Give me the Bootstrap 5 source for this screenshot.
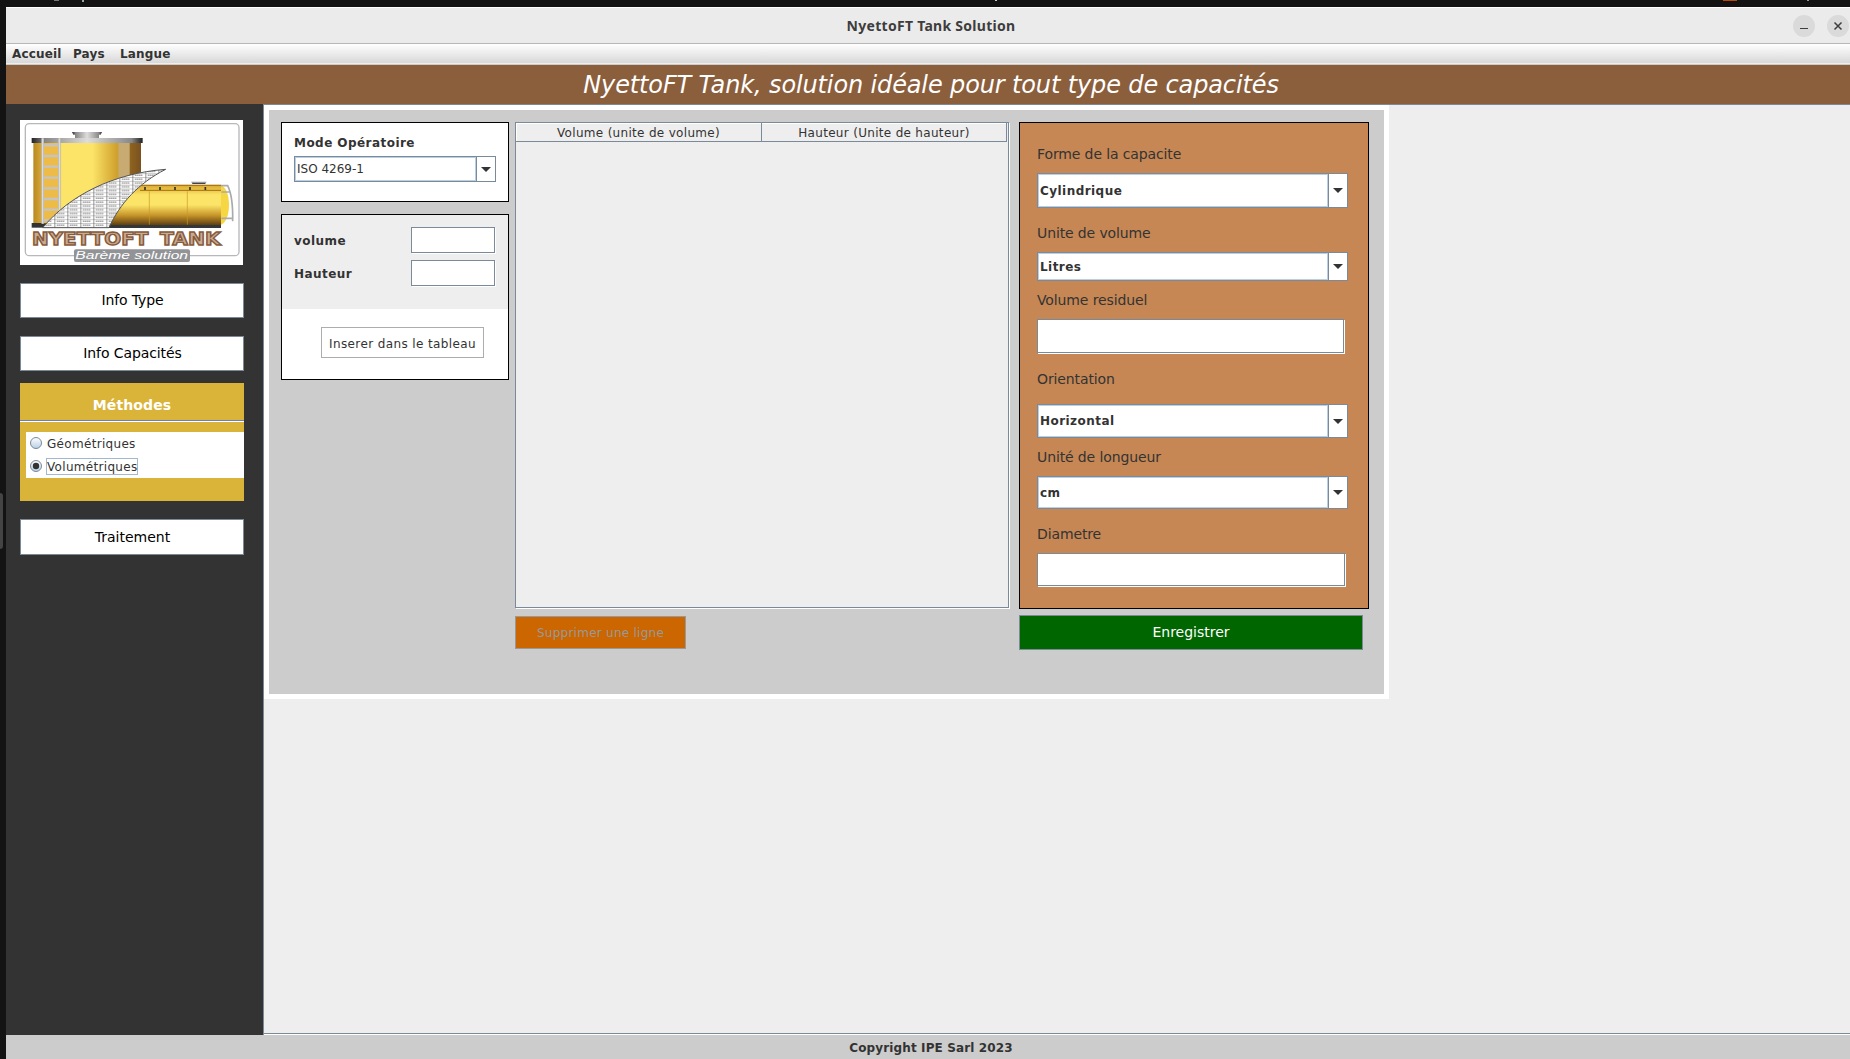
<!DOCTYPE html>
<html lang="fr">
<head>
<meta charset="utf-8">
<title>NyettoFT Tank Solution</title>
<link rel="stylesheet" href="https://cdn.jsdelivr.net/npm/bootstrap@5.3.0/dist/css/bootstrap.min.css">
<script src="https://cdn.jsdelivr.net/npm/bootstrap@5.3.0/dist/js/bootstrap.bundle.min.js"></script>
<style>
body{width:1850px;height:1059px;overflow:hidden;background:#131313;color:#333;font-family:"DejaVu Sans",sans-serif;font-size:12px;line-height:16px;letter-spacing:.31px}
.desk{height:1052px}
.desk-strip{height:7px;display:block}
.desk-edge{width:6px}
.edge-handle{width:3px;height:56px;margin-top:486px;background:#444;border-radius:0 3px 3px 0}
.titlebar{height:37px;background:#ebebeb;border-top:1px solid #fff;border-bottom:1px solid #b8b8b8}
.titlebar-lead{width:63px}
.titlebar-text{font-family:"Noto Sans","Open Sans",sans-serif;font-weight:700;font-size:14px;color:#3d3d3d;letter-spacing:.28px}
.menubar{height:21px;background:linear-gradient(#fff,#dadada 90%);border-bottom:1px solid #ccc;box-shadow:inset 0 -1px #eee;padding:0 0 1px 6px;font-weight:700;letter-spacing:.15px}
.menu-a{width:61px}.menu-b{width:47px}
.banner{height:39px;background:#8b5e3c;color:#fff;font-size:24px;font-style:italic;line-height:39px;padding:1px 0 0 6px;letter-spacing:-.13px}
.side{width:257px;background:#333;padding:16px 0 0 14px}
.side-btn{width:224px;height:35px;border:1px solid #7a8a99;border-radius:0;background:#fff;color:#000;font-size:14px;line-height:18px;padding:0 0 2px 1px;margin-top:18px;letter-spacing:-.1px}
.side-btn.tall{height:36px;padding-bottom:0;letter-spacing:0}
.logo{display:block;width:223px;height:145px}
.methods{width:224px;height:118px;background:#dab339;margin-top:12px}
.methods-title{height:37px;color:#fff;font-weight:700;font-size:14px;padding-top:7px;letter-spacing:.1px}
.methods-rule{height:2px;border-top:1px solid #6382bf;background:#fff}
.radio-box{margin:10px 0 0 6px;height:46px;background:#fff;padding:0 0 0 4px}
.radio-row{height:23px}
.radio-row svg{margin-top:-1px}
.radio-txt{border:1px solid transparent;height:17px;line-height:17px;padding:0}
.radio-txt.focused{border-color:#a3b8cc;width:92px}
.main-pane{border-left:1px solid #7a8a99;border-top:1px solid #7a8a99;background:#eee;box-shadow:inset 0 -1px #fff,inset 0 -2px #7a8a99}
.work{width:1125px;height:594px;border:5px solid #fff;background:#ccc;padding:12px 0 0 12px}
.left-col{width:234px;gap:12px}
.table-col{width:504px}
.black-box{border:1px solid #000}
.mode{width:228px;height:80px;background:#fff;padding:12px 12px 0}
.bold{font-weight:700;letter-spacing:.45px}
.combo{border:1px solid #7a8a99;background:#fff;color:#333}
.combo-val{border:1px solid #b8cfe5;padding-left:1px}
.combo-plain{letter-spacing:0}
.combo-btn{width:19px;border-left:1px solid #7a8a99}
.field{border:1px solid #7a8a99;border-radius:0;background:#fff;box-shadow:1px 1px #fff;padding:0;min-height:0;margin:0 1px 1px 0}
.field-sm{width:84px;height:26px}
.insert{width:228px;height:166px;background:#fff}
.insert-top{height:94px;background:#eee;padding:12px 12px 0}
.btn-insert{width:163px;height:31px;border:1px solid #adadad;border-radius:0;background:#fff;color:#333;font-size:12px;line-height:16px;padding:2px 0 0;margin:18px 0 0 39px;letter-spacing:.38px}
.tbl{width:494px;height:486px;border:1px solid #7a8a99;background:#eee;box-shadow:1px 1px #fff}
.tbl-head{height:19px;border-bottom:1px solid #7a8a99;box-shadow:inset 1px 1px #fff;margin-right:1px}
.tbl-cell{border-right:1px solid #7a8a99;padding-top:2px}
.tbl-first{width:246px}
.btn-del{width:171px;height:33px;background:#cc6600;border:1px solid #999;border-radius:0;color:#999;font-size:12px;line-height:16px;padding:0;margin-top:8px;letter-spacing:.26px}
.btn-del:hover{color:#999;background:#cc6600}
.params{width:350px;height:487px;background:#c68754;padding:22px 0 0 17px}
.lbl{font-size:14px;line-height:18px;letter-spacing:-.12px}
.btn-save{width:344px;height:35px;background:#006600;border:1px solid #7a8a99;border-radius:0;color:#fff;font-size:14px;line-height:18px;padding:0 0 2px;margin-top:6px;letter-spacing:0}
.foot{height:24px;background:#ccc;font-weight:700;padding:1px 0 0 6px;letter-spacing:.13px}
.w311{width:311px}
.h26{height:26px}.h29{height:29px}.h33{height:33px}.h34{height:34px}.h35{height:35px}
.g5{margin-top:5px}.g6{margin-top:6px}.g10{margin-top:10px}.g16{margin-top:16px}.g17{margin-top:17px}
.f307{width:307px}.f308{width:308px}
</style>
</head>
<body>
<svg class="desk-strip" width="1850" height="7"><path d="M54 0h5v1h-5z" fill="#777"/><path d="M82 0h1v2h-1z" fill="#5bd"/><path d="M83 0h1v2h-1z" fill="#d96"/><path d="M995 0h2v1h-2z" fill="#ccc"/><path d="M1723 0h14v1h-14z" fill="#b84a0a"/><path d="M1807 0h2v1h-2z" fill="#999"/></svg>
<div class="desk d-flex">
<div class="desk-edge"><div class="edge-handle"></div></div>
<div class="flex-grow-1 d-flex flex-column">
  <header class="titlebar d-flex align-items-center">
    <div class="titlebar-lead"></div>
    <div class="flex-grow-1 text-center titlebar-text">NyettoFT Tank Solution</div>
    <svg width="57" height="24" viewBox="0 0 57 24"><circle cx="11" cy="12" r="11" fill="#dadada"/><path d="M7 14.5h8" stroke="#3d3d3d"/><circle cx="45" cy="12" r="11" fill="#dadada"/><path d="M41.5 8.500l7 7M48.500 8.500l-7 7" stroke="#3d3d3d" stroke-width="1.500"/></svg>
  </header>
  <nav class="menubar d-flex align-items-center"><span class="menu-a">Accueil</span><span class="menu-b">Pays</span><span>Langue</span></nav>
  <div class="banner text-center">NyettoFT Tank, solution idéale pour tout type de capacités</div>
  <div class="d-flex flex-grow-1">
    <aside class="side">
      <svg class="logo" viewBox="60 360 669 435" preserveAspectRatio="none">
        <defs>
          <linearGradient id="body1"><stop offset="0" stop-color="#b88a20"/><stop offset=".1" stop-color="#e0b040"/><stop offset=".27" stop-color="#fbe468"/><stop offset=".55" stop-color="#fbe468"/><stop offset=".78" stop-color="#cf9f2c"/><stop offset=".8" stop-color="#c8ab72"/><stop offset=".89" stop-color="#c8ab72"/><stop offset=".9" stop-color="#8e6420"/><stop offset="1" stop-color="#7a5020"/></linearGradient>
          <linearGradient id="rim"><stop offset="0" stop-color="#222"/><stop offset=".12" stop-color="#888"/><stop offset=".5" stop-color="#ddd"/><stop offset=".9" stop-color="#888"/><stop offset="1" stop-color="#222"/></linearGradient>
          <linearGradient id="body2" x2="0" y2="1"><stop offset="0" stop-color="#d9a52c"/><stop offset=".25" stop-color="#fbe468"/><stop offset=".5" stop-color="#fbe468"/><stop offset=".75" stop-color="#c8962a"/><stop offset="1" stop-color="#5c3c12"/></linearGradient>
          <pattern id="sheet" x="124" y="508" width="39" height="11.500" patternUnits="userSpaceOnUse"><path d="M0 0h39v12H0z" fill="#fff"/><path d="M0 1h39" stroke="#888" stroke-width="1.600"/><path d="M1 0v12" stroke="#666" stroke-width="2.500"/><path d="M8 6.500h24" stroke="#8a8a8a" stroke-width="4" stroke-dasharray="4 2"/></pattern>
        </defs>
        <path fill="#fff" d="M60 360h669v435H60z"/>
        <rect x="76" y="371" width="641" height="396" rx="12" fill="none" stroke="#b8b8bb" stroke-width="4"/>
        <path fill="url(#body1)" d="M100 428h323v252H100z"/>
        <path fill="url(#rim)" d="M95 414h333v15H95z"/>
        <path fill="#333" d="M95 669h52v14H95z"/>
        <path fill="url(#rim)" d="M216 396h90l-4 8h-82zM225 404h72v10h-72z"/>
        <path fill="#edbb48" d="M130 430h45v240h-45z"/>
        <path d="M128 415v256M178 415v212" stroke="#b9b9b9" stroke-width="8"/>
        <path d="M128 415v256M178 415v212" stroke="#e2e2e2" stroke-width="3"/>
        <path d="M132 436h42M132 468h42M132 500h42M132 533h42M132 565h42M132 597h42M132 629h42M132 661h20" stroke="#c4c4c4" stroke-width="7"/>
        <path fill="url(#body2)" d="M370 554h293v122H310z"/>
        <path fill="#33373a" d="M325 675h338v9H325z"/>
        <path d="M420 556h243M420 571h243" stroke="#a36e10" stroke-width="3"/>
        <path d="M435 561v9M480 561v9M525 561v9M570 561v9M616 561v9" stroke="#333" stroke-width="5"/>
        <path d="M448 574v100M562 574v100" stroke="#c99a28" stroke-width="2"/>
        <path fill="#f6d743" d="M663 556c32 10 32 108 0 118z"/>
        <path d="M663 557h20c10 20 16 60 15 107M664 576h28M664 655h34" fill="none" stroke="#aaa" stroke-width="5"/>
        <path fill="#999" d="M573 545h47l-5 7h-37z"/><path fill="#444" d="M577 549h39v3h-39z"/>
        <path d="M128 683C210 585 340 520 497 508C415 550 360 610 327 683z" fill="url(#sheet)" stroke="#555" stroke-width="3"/>
        <text x="96" y="735" textLength="349" lengthAdjust="spacingAndGlyphs" font-family="DejaVu Sans" font-weight="700" font-size="51" letter-spacing="0" fill="#c9ab92" stroke="#875b3b" stroke-width="4">NYETTOFT</text>
        <text x="480" y="735" textLength="182" lengthAdjust="spacingAndGlyphs" font-family="DejaVu Sans" font-weight="700" font-size="51" letter-spacing="0" fill="#c9ab92" stroke="#875b3b" stroke-width="4">TANK</text>
        <rect x="222" y="748" width="348" height="38" rx="6" fill="#929396"/>
        <text x="226" y="778" textLength="338" lengthAdjust="spacingAndGlyphs" font-family="Liberation Sans" font-style="italic" font-size="35" letter-spacing="0" fill="#fff">Barème solution</text>
      </svg>
      <button class="btn side-btn d-block">Info Type</button>
      <button class="btn side-btn d-block">Info Capacités</button>
      <section class="methods">
        <div class="methods-title d-flex align-items-center justify-content-center">Méthodes</div>
        <div class="methods-rule"></div>
        <div class="radio-box">
          <div class="radio-row d-flex align-items-center"><svg width="12" height="12"><defs><linearGradient id="rg" x2="0" y2="1"><stop offset="0" stop-color="#fff"/><stop offset="1" stop-color="#b8cfe5"/></linearGradient></defs><circle cx="6" cy="6" r="5.500" fill="url(#rg)" stroke="#7a8a99"/></svg><span class="radio-txt ms-1">Géométriques</span></div>
          <div class="radio-row d-flex align-items-center"><svg width="12" height="12"><circle cx="6" cy="6" r="5.500" fill="url(#rg)" stroke="#7a8a99"/><circle cx="6" cy="6" r="3.200" fill="#333"/></svg><span class="radio-txt focused ms-1">Volumétriques</span></div>
        </div>
      </section>
      <button class="btn side-btn tall d-block">Traitement</button>
    </aside>
    <main class="main-pane flex-grow-1">
      <div class="work d-flex align-items-start">
        <div class="left-col d-flex flex-column">
          <section class="black-box mode">
            <div class="bold">Mode Opératoire</div>
            <div class="combo d-flex h26 g5"><div class="combo-val combo-plain flex-grow-1 d-flex align-items-center">ISO 4269-1</div><div class="combo-btn d-flex align-items-center justify-content-center"><svg width="10" height="5"><path d="M0 0h10L5 5z" fill="#333"/></svg></div></div>
          </section>
          <section class="black-box insert">
            <div class="insert-top">
              <div class="d-flex justify-content-between align-items-center bold"><span>volume</span><input class="field field-sm"></div>
              <div class="d-flex justify-content-between align-items-center bold g6"><span>Hauteur</span><input class="field field-sm"></div>
            </div>
            <button class="btn btn-insert d-block">Inserer dans le tableau</button>
          </section>
        </div>
        <div class="table-col">
          <div class="tbl"><div class="tbl-head d-flex text-center"><div class="tbl-cell tbl-first">Volume (unite de volume)</div><div class="tbl-cell flex-grow-1">Hauteur (Unite de hauteur)</div></div></div>
          <button class="btn btn-del d-block">Supprimer une ligne</button>
        </div>
        <div>
          <section class="black-box params">
            <div class="lbl">Forme de la capacite</div>
            <div class="combo d-flex w311 h35 g10 bold"><div class="combo-val flex-grow-1 d-flex align-items-center">Cylindrique</div><div class="combo-btn d-flex align-items-center justify-content-center"><svg width="10" height="5"><path d="M0 0h10L5 5z" fill="#333"/></svg></div></div>
            <div class="lbl g16">Unite de volume</div>
            <div class="combo d-flex w311 h29 g10 bold"><div class="combo-val flex-grow-1 d-flex align-items-center">Litres</div><div class="combo-btn d-flex align-items-center justify-content-center"><svg width="10" height="5"><path d="M0 0h10L5 5z" fill="#333"/></svg></div></div>
            <div class="lbl g10">Volume residuel</div>
            <input class="field d-block g10 f307 h34">
            <div class="lbl g17">Orientation</div>
            <div class="combo d-flex w311 h34 g16 bold"><div class="combo-val flex-grow-1 d-flex align-items-center">Horizontal</div><div class="combo-btn d-flex align-items-center justify-content-center"><svg width="10" height="5"><path d="M0 0h10L5 5z" fill="#333"/></svg></div></div>
            <div class="lbl g10">Unité de longueur</div>
            <div class="combo d-flex w311 h33 g10 bold"><div class="combo-val flex-grow-1 d-flex align-items-center">cm</div><div class="combo-btn d-flex align-items-center justify-content-center"><svg width="10" height="5"><path d="M0 0h10L5 5z" fill="#333"/></svg></div></div>
            <div class="lbl g16">Diametre</div>
            <input class="field d-block g10 f308 h33">
          </section>
          <button class="btn btn-save d-block">Enregistrer</button>
        </div>
      </div>
    </main>
  </div>
  <footer class="foot d-flex align-items-center justify-content-center">Copyright IPE Sarl 2023</footer>
</div>
</div>
</body>
</html>
